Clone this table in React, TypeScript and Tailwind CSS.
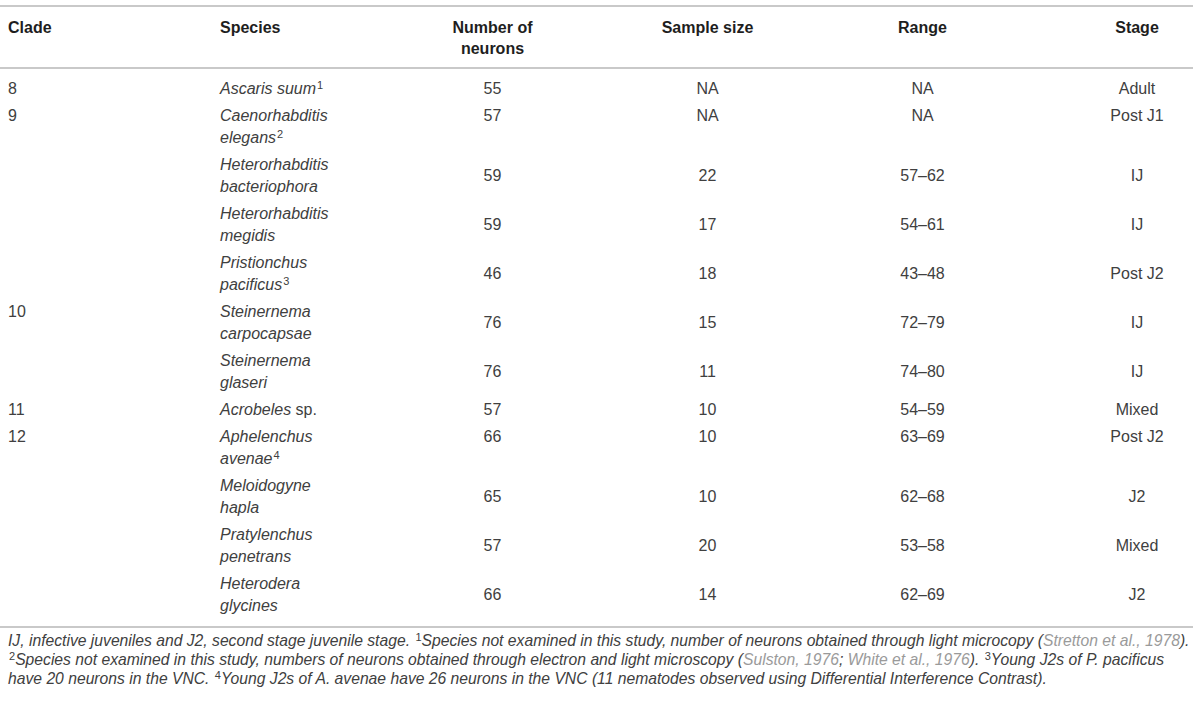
type Row = {
  clade?: string;
  species: [string, string?];
  sup?: string;
  neurons: string;
  sample: string;
  range: string;
  stage: string;
  top?: boolean;
};

const rows: Row[] = [
  { clade: '8', species: ['Ascaris suum'], sup: '1', neurons: '55', sample: 'NA', range: 'NA', stage: 'Adult' },
  { clade: '9', species: ['Caenorhabditis', 'elegans'], sup: '2', neurons: '57', sample: 'NA', range: 'NA', stage: 'Post J1', top: true },
  { species: ['Heterorhabditis', 'bacteriophora'], neurons: '59', sample: '22', range: '57–62', stage: 'IJ' },
  { species: ['Heterorhabditis', 'megidis'], neurons: '59', sample: '17', range: '54–61', stage: 'IJ' },
  { species: ['Pristionchus', 'pacificus'], sup: '3', neurons: '46', sample: '18', range: '43–48', stage: 'Post J2' },
  { clade: '10', species: ['Steinernema', 'carpocapsae'], neurons: '76', sample: '15', range: '72–79', stage: 'IJ' },
  { species: ['Steinernema', 'glaseri'], neurons: '76', sample: '11', range: '74–80', stage: 'IJ' },
  { clade: '11', species: ['Acrobeles'], neurons: '57', sample: '10', range: '54–59', stage: 'Mixed' },
  { clade: '12', species: ['Aphelenchus', 'avenae'], sup: '4', neurons: '66', sample: '10', range: '63–69', stage: 'Post J2', top: true },
  { species: ['Meloidogyne', 'hapla'], neurons: '65', sample: '10', range: '62–68', stage: 'J2' },
  { species: ['Pratylenchus', 'penetrans'], neurons: '57', sample: '20', range: '53–58', stage: 'Mixed' },
  { species: ['Heterodera', 'glycines'], neurons: '66', sample: '14', range: '62–69', stage: 'J2' },
];

// superscript footnote marks stay upright, like in the printed table
const Sup = ({ n }: { n: string }) => <sup className="not-italic text-[11px] ml-px">{n}</sup>;

const App = () => {
  return (
    <div className="bg-white min-h-[701px] pt-[5px] font-['Liberation_Sans',Arial,sans-serif] text-[#404040]">
      <table className="w-[1193px] table-fixed border-collapse text-[16px]">
        <colgroup>
          <col className="w-[212px]" />
          <col className="w-[173px]" />
          <col className="w-[215px]" />
          <col className="w-[215px]" />
          <col className="w-[215px]" />
          <col className="w-[163px]" />
        </colgroup>
        <thead>
          <tr className="border-t-2 border-b-2 border-[#c9c9c9] text-[#1e1e1e] font-bold leading-[21px]">
            <th className="text-left align-top pl-2 pt-[10px] pb-[8px]">Clade</th>
            <th className="text-left align-top pl-2 pt-[10px] pb-[8px]">Species</th>
            <th className="text-center align-top pt-[10px] pb-[8px]">
              Number of
              <br />
              neurons
            </th>
            <th className="text-center align-top pt-[10px] pb-[8px]">Sample size</th>
            <th className="text-center align-top pt-[10px] pb-[8px]">Range</th>
            <th className="text-center align-top pl-[51px] pt-[10px] pb-[8px]">Stage</th>
          </tr>
        </thead>
        <tbody className="leading-[22px] border-b-2 border-[#c9c9c9]">
          {rows.map((r, i) => {
            const pad =
              i === 0
                ? 'pt-[9px] pb-[2px]'
                : i === rows.length - 1
                  ? 'pt-[3px] pb-[9px]'
                  : 'pt-[3px] pb-[2px]';
            const va = r.top ? 'align-top' : 'align-middle';
            return (
              <tr key={i}>
                <td className={`pl-2 align-top ${pad}`}>{r.clade}</td>
                <td className={`pl-2 align-top italic ${pad}`}>
                  {r.species[0]}
                  {r.species[0] === 'Acrobeles' && <span className="not-italic"> sp.</span>}
                  {!r.species[1] && r.sup && <Sup n={r.sup} />}
                  {r.species[1] && (
                    <>
                      <br />
                      {r.species[1]}
                      {r.sup && <Sup n={r.sup} />}
                    </>
                  )}
                </td>
                <td className={`text-center ${va} ${pad}`}>{r.neurons}</td>
                <td className={`text-center ${va} ${pad}`}>{r.sample}</td>
                <td className={`text-center ${va} ${pad}`}>{r.range}</td>
                <td className={`text-center pl-[51px] ${va} ${pad}`}>{r.stage}</td>
              </tr>
            );
          })}
        </tbody>
      </table>
      <div className="w-[1193px] pl-2 pt-[3px] italic text-[15.7px] leading-[19px] text-[#404040] whitespace-nowrap">
        <div>
          IJ, infective juveniles and J2, second stage juvenile stage. <Sup n="1" />Species not examined in this
          study, number of neurons obtained through light microcopy (
          <span className="text-[#9a9a9a]">Stretton et al., 1978</span>).
        </div>
        <div>
          <Sup n="2" />Species not examined in this study, numbers of neurons obtained through electron and light
          microscopy (<span className="text-[#9a9a9a]">Sulston, 1976</span>;{' '}
          <span className="text-[#9a9a9a]">White et al., 1976</span>). <Sup n="3" />Young J2s of P. pacificus
        </div>
        <div>
          have 20 neurons in the VNC. <Sup n="4" />Young J2s of A. avenae have 26 neurons in the VNC (11 nematodes
          observed using Differential Interference Contrast).
        </div>
      </div>
    </div>
  );
};

export default App;
